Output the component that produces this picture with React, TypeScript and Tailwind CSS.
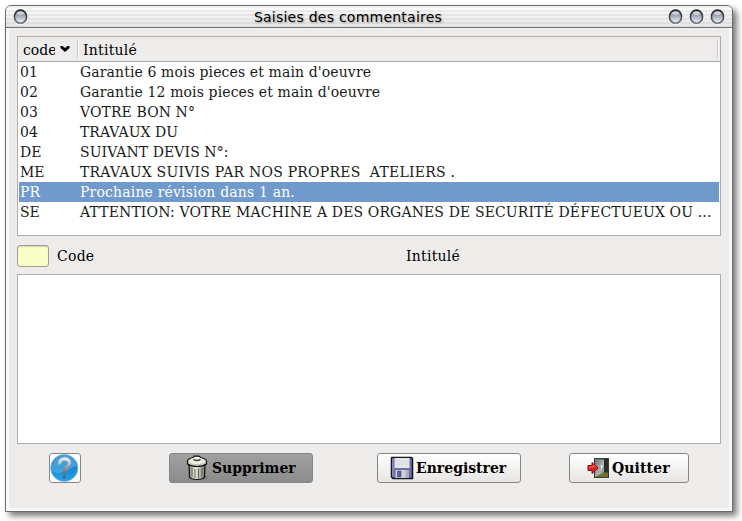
import React from "react";

const rows: [string, string, string][] = [
  ["01", "Garantie 6 mois pieces et main d'oeuvre", "tracking-[0.12px]"],
  ["02", "Garantie 12 mois pieces et main d'oeuvre", "tracking-[0.12px]"],
  ["03", "VOTRE BON N°", "tracking-[0.1px]"],
  ["04", "TRAVAUX DU", "tracking-[0.02px]"],
  ["DE", "SUIVANT DEVIS N°:", "tracking-[0.07px]"],
  ["ME", "TRAVAUX SUIVIS PAR NOS PROPRES  ATELIERS .", "tracking-[0.23px]"],
  ["PR", "Prochaine révision dans 1 an.", "tracking-[0.17px]"],
  ["SE", "ATTENTION: VOTRE MACHINE A DES ORGANES DE SECURITÉ DÉFECTUEUX OU ...", "tracking-[0.13px]"],
];

function Orb() {
  return (
    <svg width="15" height="16" viewBox="0 0 15 16" className="shrink-0">
      <defs>
        <linearGradient id="orb" x1="0" y1="0" x2="0" y2="1">
          <stop offset="0" stopColor="#80858e" />
          <stop offset="0.45" stopColor="#a3abb8" />
          <stop offset="1" stopColor="#f4f8fc" />
        </linearGradient>
        <linearGradient id="rim" x1="0" y1="0" x2="0" y2="1">
          <stop offset="0" stopColor="#222326" />
          <stop offset="0.6" stopColor="#4c4f55" />
          <stop offset="1" stopColor="#757a84" />
        </linearGradient>
      </defs>
      <ellipse cx="7.5" cy="8.4" rx="7.2" ry="7.5" fill="#fff" opacity="0.7" />
      <ellipse cx="7.5" cy="7.7" rx="6.1" ry="6.6" fill="url(#orb)" stroke="url(#rim)" strokeWidth="1.6" />
      <ellipse cx="7.5" cy="4" rx="3.4" ry="1.8" fill="#fff" opacity="0.55" />
    </svg>
  );
}

function HelpIcon() {
  return (
    <svg width="30" height="28" viewBox="0 0 30 28">
      <defs>
        <linearGradient id="hb" x1="0" y1="0" x2="0" y2="1">
          <stop offset="0" stopColor="#2d83be" />
          <stop offset="0.5" stopColor="#1786cd" />
          <stop offset="1" stopColor="#24a5f0" />
        </linearGradient>
        <linearGradient id="hq" x1="0" y1="0" x2="0" y2="1">
          <stop offset="0" stopColor="#e9ebec" />
          <stop offset="0.5" stopColor="#a3a3a3" />
          <stop offset="1" stopColor="#6c6866" />
        </linearGradient>
      </defs>
      <circle cx="14.3" cy="14" r="13.6" fill="url(#hb)" stroke="#8dbbd6" strokeWidth="0.8" />
      <path d="M1.5 16C2 6 8 1 14.5 1C21 1 26 6 27 12C20 13 17 19 9 19C5 19 2.500 18 1.500 16Z" fill="#80c8f1" opacity="0.38" />
      <path d="M9.500 10.300C9 3.300 19.500 3.300 19.500 9C19.500 13 14 12.500 14.200 19.500" fill="none" stroke="url(#hq)" strokeWidth="3.300" />
      <circle cx="14.200" cy="23" r="1.600" fill="#615a58" />
    </svg>
  );
}

function TrashIcon() {
  return (
    <svg width="24" height="26" viewBox="0 0 24 26">
      <defs>
        <linearGradient id="can" x1="0" y1="0" x2="1" y2="0">
          <stop offset="0" stopColor="#8c8c7c" />
          <stop offset="0.4" stopColor="#eaeada" />
          <stop offset="1" stopColor="#77776a" />
        </linearGradient>
      </defs>
      <ellipse cx="13" cy="22.500" rx="10" ry="2.500" fill="#555" opacity="0.4" />
      <path d="M4 10L4.500 22Q6 24.500 12 24.500Q18 24.500 19.500 22L20 10Z" fill="url(#can)" stroke="#111" strokeWidth="1.200" />
      <path d="M7 13V22M10 14V23M13.500 14V23M17 13V22" stroke="#66665a" strokeWidth="1" />
      <path d="M2.500 6Q3 3.500 8 2.500L9 1.200H14L15.500 2.500Q21 3.500 21.500 6V9Q18 11.500 12 11.500Q6 11.500 2.500 9Z" fill="#c8c8b8" stroke="#111" strokeWidth="1.200" />
      <path d="M3.500 6.200Q6 3 12 3Q18 3 20.500 6.200Q18 9 12 9Q6 9 3.500 6.200Z" fill="#f0f0e2" />
      <path d="M8.500 4.500Q12 6.500 15.500 4.500" fill="none" stroke="#45453c" strokeWidth="1.500" />
      <path d="M9.500 2.800H14.500" stroke="#f8f8ef" strokeWidth="1.500" />
    </svg>
  );
}

function FloppyIcon() {
  return (
    <svg width="24" height="24" viewBox="0 0 24 24">
      <path d="M2 1.500H21.500L22.500 2.500V22.500H3L1.500 21V2Z" fill="#6e6fa5" stroke="#15151e" strokeWidth="1.500" />
      <path d="M2.800 2.500V20.500" stroke="#9b9dca" />
      <rect x="4.500" y="2" width="15" height="10" fill="#e3e5e7" />
      <path d="M5 5H19M5 8H19" stroke="#d7dadd" />
      <rect x="5.500" y="14" width="13" height="8" fill="#d1d2d8" />
      <rect x="7.500" y="15" width="3.500" height="6" rx="0.500" fill="#6062a0" stroke="#414377" strokeWidth="0.600" />
      <rect x="15.500" y="14" width="3" height="8" fill="#aeb0bc" />
    </svg>
  );
}

function ExitIcon() {
  return (
    <svg width="23" height="22" viewBox="0 0 23 22">
      <defs>
        <linearGradient id="door" x1="0" y1="0" x2="1" y2="1">
          <stop offset="0" stopColor="#6c716f" />
          <stop offset="0.6" stopColor="#b0b4b2" />
          <stop offset="1" stopColor="#777c79" />
        </linearGradient>
      </defs>
      <rect x="7.500" y="1.500" width="14" height="19" fill="#292d2c" stroke="#343b39" />
      <path d="M8 20L16 15.500H21V20Z" fill="#707027" />
      <path d="M8 2L17 2.500V15.500L8 20Z" fill="url(#door)" />
      <path d="M14.500 8.500V11.500M14 9H16" stroke="#f2f2f2" strokeWidth="1" />
      <path d="M1 8.500H5V5.500L11 11L5 16.500V13.500H1Z" fill="#d92525" stroke="#9b0909" strokeWidth="1" />
      <path d="M2 10H6.500V8L9 10.500" fill="none" stroke="#f17b73" strokeWidth="0.800" />
    </svg>
  );
}

const btn =
  "flex h-[30px] items-center rounded-[3px] border border-[#888683] text-[14px] font-bold text-black shadow-[inset_0_1px_0_#ffffff80]";

export default function App() {
  return (
    <div className="h-[521px] w-[742px] overflow-hidden bg-white pl-[5px] pt-[5px] font-['DejaVu_Serif',serif] text-[14px] text-[#1a1a1a]">
      <div className="flex h-[507px] w-[728px] flex-col rounded-t-[6px] border border-[#6b6b6b] bg-[#f8f8f8] shadow-[4px_4px_6px_#00000085]">
        <header className="flex h-[22px] shrink-0 items-center rounded-t-[5px] border-b border-[#737373] bg-[linear-gradient(to_bottom,#ffffff00,#00000018),repeating-linear-gradient(to_bottom,#f0f0f0_0px,#f0f0f0_2px,#fdfdfd_2px,#fdfdfd_4px)] pl-[7px] pr-[7px]">
          <Orb />
          <h1 className="flex-1 text-center font-['DejaVu_Sans',sans-serif] text-[14px] leading-[20px] tracking-[0.24px] text-black [text-shadow:1px_1px_2px_#00000050]">
            Saisies des commentaires
          </h1>
          <div className="flex gap-[6px]">
            <Orb />
            <Orb />
            <Orb />
          </div>
        </header>
        <main className="mx-[3px] mb-[3px] flex-1 bg-[#edeceb] px-2 pt-2">
          <section className="h-[200px] w-[704px] border border-[#b0aeac] bg-white">
            <div className="flex h-[25px] w-[702px] items-center border-b border-[#a9a7a5] bg-[#edeceb] pr-px text-black">
              <div className="flex w-[59px] items-center pl-[5px]">
                <span className="w-[32px] overflow-hidden pt-[3px]">code</span>
                <svg width="10" height="8" viewBox="0 0 10 8" className="ml-[5px]">
                  <path d="M0.500 1L2.500 1L5 3L7.500 1H9.500V3L5 7L0.500 3Z" fill="#000" />
                </svg>
              </div>
              <div className="h-[18px] border-l border-[#c9c7c5] bg-white pl-px" />
              <span className="flex-1 pl-1 pt-[3px] tracking-[0.25px]">Intitulé</span>
              <div className="h-[18px] border-l border-[#c9c7c5] bg-white pl-px" />
            </div>
            <div className="px-px">
              {rows.map(([code, label, tracking]) => (
                <div
                  key={code}
                  className={
                    "flex h-5 items-center whitespace-pre pl-px leading-5 " +
                    (code === "PR" ? "bg-[#7099cc] text-white" : "")
                  }
                >
                  <span className="w-[60px]">{code}</span>
                  <span className={tracking}>{label}</span>
                </div>
              ))}
            </div>
          </section>
          <div className="mt-[9px] flex h-[22px] items-center text-black">
            <div className="h-[22px] w-[32px] rounded-[3px] border border-[#a09e94] bg-[#faffc8] shadow-[inset_0_1px_1px_#d5d9ad]" />
            <span className="w-[349px] pl-2 tracking-[0.25px]">Code</span>
            <span className="pl-2 tracking-[0.25px]">Intitulé</span>
          </div>
          <div className="mt-[7px] h-[170px] w-[704px] border border-[#b0aeac] bg-white" />
          <footer className="mt-[9px] flex pl-[32px]">
            <button className={btn + " w-[32px] bg-white"}>
              <HelpIcon />
            </button>
            <button className={btn + " ml-[88px] w-[144px] border-[#5f5f5f] bg-gradient-to-b from-[#a0a0a0] to-[#8c8c8c] pl-[15px] shadow-none"}>
              <TrashIcon />
              <span className="pl-[3px]">Supprimer</span>
            </button>
            <button className={btn + " ml-[64px] w-[144px] bg-gradient-to-b from-white to-[#e7e5e3] pl-[12px]"}>
              <FloppyIcon />
              <span className="pl-[2px]">Enregistrer</span>
            </button>
            <button className={btn + " ml-[48px] w-[120px] bg-gradient-to-b from-white to-[#e7e5e3] pl-[17px]"}>
              <ExitIcon />
              <span className="pl-[2px] tracking-[0.1px]">Quitter</span>
            </button>
          </footer>
        </main>
      </div>
    </div>
  );
}
